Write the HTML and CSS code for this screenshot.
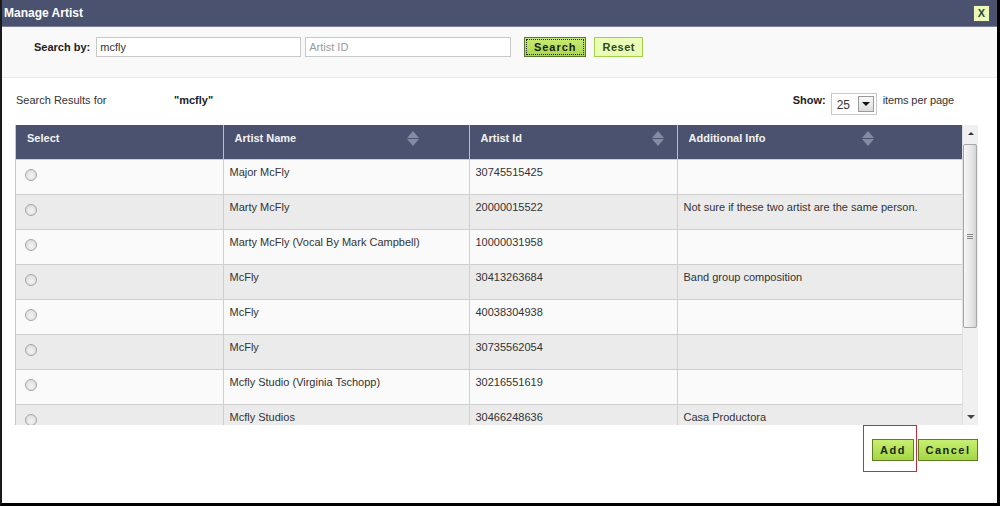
FILE: index.html
```html
<!DOCTYPE html>
<html>
<head>
<meta charset="utf-8">
<title>Manage Artist</title>
<link rel="stylesheet" href="styles.css">
</head>
<body>
<div class="window">
  <div class="titlebar">
    <span class="title">Manage Artist</span>
    <span class="close">X</span>
  </div>
  <div class="searchbar">
    <span class="search-label">Search by:</span>
    <input class="field field-name" type="text" value="mcfly">
    <input class="field field-id" type="text" placeholder="Artist ID">
    <button class="btn btn-search"><span class="focus">Search</span></button>
    <button class="btn btn-reset">Reset</button>
  </div>
  <div class="results">
    <div class="results-head">
      <div class="results-for"><span class="rf-label">Search Results for</span><span class="rf-term">"mcfly"</span></div>
      <div class="show">
        <span class="show-label">Show:</span>
        <span class="select"><span class="select-val">25</span><span class="select-btn"><span class="tri-down"></span></span></span>
        <span class="show-suffix">items per page</span>
      </div>
    </div>
    <div class="grid-wrap">
      <div class="grid-view">
        <table class="grid">
          <colgroup>
            <col class="c1"><col class="c2"><col class="c3"><col class="c4">
          </colgroup>
          <thead>
            <tr>
              <th class="th-select">Select</th>
              <th><div class="th-in th-name"><span>Artist Name</span><span class="sort"><span class="s-up"></span><span class="s-down"></span></span></div></th>
              <th><div class="th-in th-id"><span>Artist Id</span><span class="sort"><span class="s-up"></span><span class="s-down"></span></span></div></th>
              <th><div class="th-in th-info"><span>Additional Info</span><span class="sort"><span class="s-up"></span><span class="s-down"></span></span></div></th>
            </tr>
          </thead>
          <tbody>
            <tr class="odd"><td class="td-radio"><span class="radio"></span></td><td>Major McFly</td><td>30745515425</td><td></td></tr>
            <tr class="even"><td class="td-radio"><span class="radio"></span></td><td>Marty McFly</td><td>20000015522</td><td>Not sure if these two artist are the same person.</td></tr>
            <tr class="odd"><td class="td-radio"><span class="radio"></span></td><td>Marty McFly (Vocal By Mark Campbell)</td><td>10000031958</td><td></td></tr>
            <tr class="even"><td class="td-radio"><span class="radio"></span></td><td>McFly</td><td>30413263684</td><td>Band group composition</td></tr>
            <tr class="odd"><td class="td-radio"><span class="radio"></span></td><td>McFly</td><td>40038304938</td><td></td></tr>
            <tr class="even"><td class="td-radio"><span class="radio"></span></td><td>McFly</td><td>30735562054</td><td></td></tr>
            <tr class="odd"><td class="td-radio"><span class="radio"></span></td><td>Mcfly Studio (Virginia Tschopp)</td><td>30216551619</td><td></td></tr>
            <tr class="even"><td class="td-radio"><span class="radio"></span></td><td>Mcfly Studios</td><td>30466248636</td><td>Casa Productora</td></tr>
          </tbody>
        </table>
      </div>
      <div class="vscroll">
        <div class="sb-arrow sb-up"><span class="sb-tri-up"></span></div>
        <div class="sb-track">
          <div class="sb-thumb"><span class="grip"></span></div>
        </div>
        <div class="sb-arrow sb-down"><span class="sb-tri-down"></span></div>
      </div>
    </div>
  </div>
  <div class="footer">
    <span class="add-focus"><button class="btn btn-big">Add</button></span>
    <button class="btn btn-big btn-cancel">Cancel</button>
  </div>
</div>
</body>
</html>
```

FILE: styles.css
```css
* { box-sizing: border-box; }
html, body { margin: 0; padding: 0; background: #fff; }
body { font-family: "Liberation Sans", Arial, sans-serif; font-size: 11px; color: #333; }

.window {
  width: 1000px; height: 506px;
  border-left: 2px solid #1a1a1a;
  border-right: 3px solid #000;
  border-bottom: 3px solid #000;
  display: flex; flex-direction: column;
  background: #fff;
  overflow: hidden;
}

.titlebar {
  height: 27px; flex: none;
  background: #4a5270;
  border-bottom: 1px solid #7a809a;
  display: flex; align-items: center; justify-content: space-between;
  padding: 0 7px 1px 2px;
}
.title { color: #fff; font-weight: bold; font-size: 12px; }
.close {
  width: 17px; height: 17px;
  background: #eef9b8; border: 1px solid #55652a;
  color: #1d4a3c; font-weight: bold; font-size: 11px;
  display: flex; align-items: center; justify-content: center;
  margin-top: 1px;
}

.searchbar {
  height: 51px; flex: none;
  background: #f9f9f9;
  border-bottom: 1px solid #ebebeb;
  display: flex; align-items: flex-start;
  padding: 10px 0 0 32px;
}
.search-label { font-weight: bold; color: #222; line-height: 20px; margin-right: 6px; }
.field {
  height: 20px; border: 1px solid #c8c8c8; background: #fff;
  font-family: "Liberation Sans", Arial, sans-serif; font-size: 11px; color: #333;
  padding: 0 3px; outline: none; margin: 0;
}
.field::placeholder { color: #999; }
.field-name { width: 205px; margin-right: 4px; }
.field-id { width: 206px; margin-right: 13px; }

.btn {
  font-family: "Liberation Sans", Arial, sans-serif; font-weight: bold; font-size: 11px;
  letter-spacing: 1px; margin: 0; padding: 0; cursor: pointer;
}
.btn-search {
  width: 62px; height: 20px;
  background: linear-gradient(#c9ec73, #a9d64b);
  border: 1px solid #55772a; color: #1a1a1a;
  padding: 1px; margin-right: 8px;
}
.btn-search .focus {
  display: flex; align-items: center; justify-content: center;
  width: 100%; height: 100%;
  border: 1px dotted #222;
}
.btn-reset {
  width: 49px; height: 20px;
  background: #eafcb6; border: 1px solid #a3d04a; color: #2f4a1a;
  letter-spacing: 0.5px;
}

.results { padding: 15px 0 0 13px; flex: none; }
.results-head {
  display: flex; justify-content: space-between; align-items: flex-start;
  height: 22px; padding: 0 43px 0 1px; margin-bottom: 10px;
}
.results-for { display: flex; line-height: 14px; }
.rf-label { width: 158px; color: #333; }
.rf-term { font-weight: bold; color: #222; }
.show { display: flex; align-items: flex-start; line-height: 14px; }
.show-label { font-weight: bold; color: #222; margin-right: 5px; }
.select {
  width: 46px; height: 22px; border: 1px solid #c8c8c8; background: #fff;
  display: flex; align-items: center; justify-content: space-between;
  padding: 0 2px 0 5px; margin-right: 6px;
}
.select-val { font-size: 12px; color: #333; padding-top: 2px; }
.select-btn {
  width: 16px; height: 16px; border: 1px solid #999;
  background: linear-gradient(#fafafa, #dcdcdc);
  display: flex; align-items: center; justify-content: center;
}
.tri-down {
  width: 0; height: 0;
  border-left: 4px solid transparent; border-right: 4px solid transparent;
  border-top: 4px solid #111;
}
.show-suffix { color: #333; letter-spacing: -0.1px; }

.grid-wrap { display: flex; width: 963px; height: 300px; }
.grid-view { width: 947px; height: 300px; overflow: hidden; border-left: 1px solid #c8c8c8; }
.grid { border-collapse: collapse; table-layout: fixed; width: 947px; }
.c1 { width: 207px; } .c2 { width: 246px; } .c3 { width: 208px; } .c4 { width: 286px; }

.grid th {
  height: 34px; background: #4a5270; color: #f2f2f2;
  font-weight: bold; font-size: 11px; text-align: left; vertical-align: top;
  padding: 7px 0 0 11px;
  border-right: 1px solid #b9bdc9;
}
.grid th:last-child { border-right: none; }
.grid th.th-select { padding-left: 11px; }
.th-in { display: flex; justify-content: space-between; align-items: flex-start; }
.th-name { padding-right: 50px; }
.th-id { padding-right: 13px; }
.th-info { padding-right: 89px; }
.sort { display: flex; flex-direction: column; gap: 1px; margin-top: -1px; }
.s-up {
  width: 0; height: 0;
  border-left: 6px solid transparent; border-right: 6px solid transparent;
  border-bottom: 7px solid #858ba0;
}
.s-down {
  width: 0; height: 0;
  border-left: 6px solid transparent; border-right: 6px solid transparent;
  border-top: 7px solid #858ba0;
}

.grid td {
  height: 35px; vertical-align: top;
  padding: 6px 6px 0;
  border: 1px solid #cfcfcf;
  color: #333; font-size: 11px;
  white-space: nowrap; overflow: hidden;
}
.grid td:first-child { border-left: none; }
.grid tr.odd td { background: #fafafa; }
.grid tr.even td { background: #ebebeb; }
.grid td.td-radio { padding: 9px 0 0 9px; }
.radio {
  display: block; width: 12px; height: 12px; border-radius: 50%;
  border: 1px solid #a5a5a5;
  background: radial-gradient(circle at 50% 60%, #f4f4f4, #d6d6d6);
}

.vscroll {
  width: 16px; height: 300px;
  background: #f0f0f0; border-left: 1px solid #e0e0e0;
  display: flex; flex-direction: column;
}
.sb-arrow { height: 17px; flex: none; display: flex; align-items: center; justify-content: center; }
.sb-tri-up {
  width: 0; height: 0;
  border-left: 3px solid transparent; border-right: 3px solid transparent;
  border-bottom: 3px solid #333;
}
.sb-tri-down {
  width: 0; height: 0;
  border-left: 4px solid transparent; border-right: 4px solid transparent;
  border-top: 4px solid #444;
}
.sb-track { flex: 1; padding: 2px 0 0 0; }
.sb-thumb {
  height: 184px; margin: 0 1px 0 0;
  border: 1px solid #a7a7a7; border-radius: 2px;
  background: linear-gradient(90deg, #f6f6f6, #e6e6e6 60%, #d4d4d4);
  display: flex; align-items: center; justify-content: center;
}
.grip {
  width: 6px; height: 5px;
  border-top: 1px solid #888; border-bottom: 1px solid #888;
}
.grip::after {
  content: ""; display: block; width: 6px; height: 1px; background: #888; margin-top: 1px;
}

.footer { display: flex; justify-content: flex-end; align-items: flex-start; padding-right: 19px; flex: none; }
.add-focus {
  display: block; border: 1px solid #c0313c;
  padding: 13px 2px 10px 8px; margin-right: 1px;
}
.btn-big {
  height: 22px; display: block;
  background: linear-gradient(#c7ef70, #a4d645);
  border: 1px solid #5e7e26; color: #172a14;
  font-size: 11px; letter-spacing: 1.5px;
}
.add-focus .btn-big { width: 42px; }
.btn-cancel { width: 60px; margin-top: 14px; }
```
